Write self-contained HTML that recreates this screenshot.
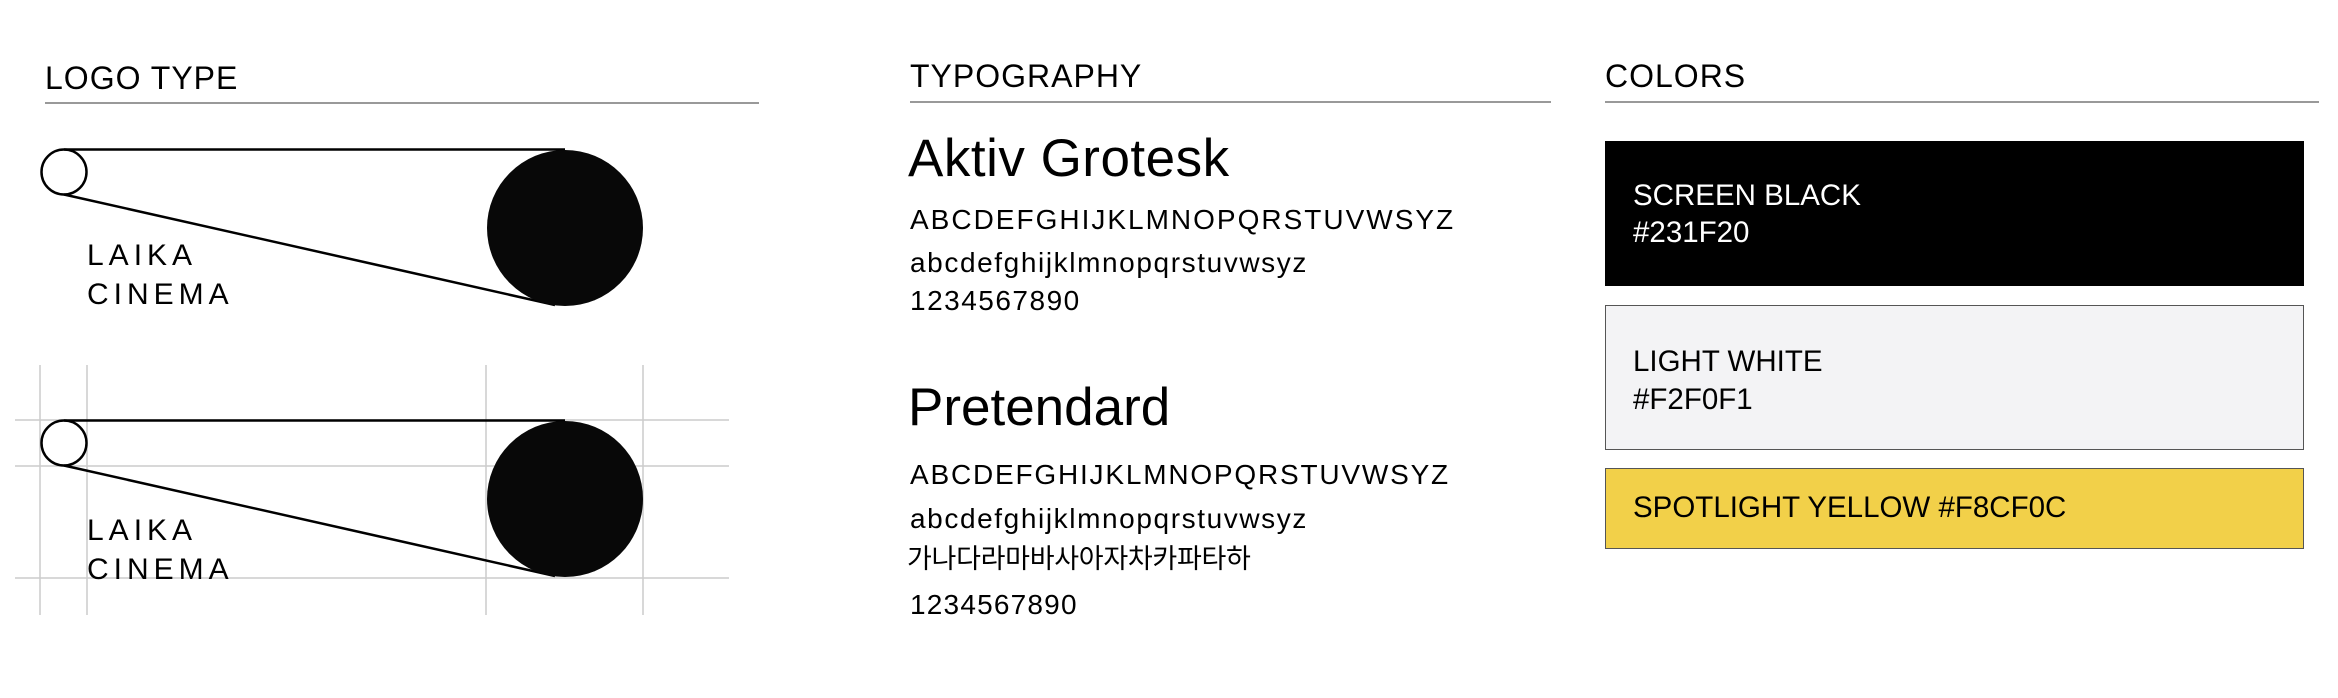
<!DOCTYPE html>
<html><head><meta charset="utf-8"><style>
html,body{margin:0;padding:0;background:#fff;}
body{width:2338px;height:698px;position:relative;overflow:hidden;font-family:"Liberation Sans","Noto Sans CJK KR",sans-serif;color:#000;}
.t{position:absolute;white-space:nowrap;line-height:1;}
.h{font-size:32px;letter-spacing:1px;}
.rule{position:absolute;height:2px;background:#999;}
.box{position:absolute;box-sizing:border-box;}
.c{font-size:29.5px;}
</style></head><body>
<div class="t h" style="left:45px;top:62px;">LOGO TYPE</div>
<div class="rule" style="left:45px;top:102px;width:714px;"></div>
<div class="t h" style="left:910px;top:60px;">TYPOGRAPHY</div>
<div class="rule" style="left:910px;top:101px;width:641px;"></div>
<div class="t h" style="left:1605px;top:60px;">COLORS</div>
<div class="rule" style="left:1605px;top:101px;width:714px;"></div>

<svg style="position:absolute;left:0;top:0" width="780" height="698">
  <g stroke="#ccc" stroke-width="1.5">
    <line x1="40" y1="365" x2="40" y2="615"/><line x1="87" y1="365" x2="87" y2="615"/>
    <line x1="486" y1="365" x2="486" y2="615"/><line x1="643" y1="365" x2="643" y2="615"/>
    <line x1="15" y1="420" x2="729" y2="420"/><line x1="15" y1="466" x2="729" y2="466"/>
    <line x1="15" y1="578" x2="729" y2="578"/>
  </g>
  <g stroke="#000" stroke-width="2.5" fill="none">
    <ellipse cx="64" cy="172" rx="22.5" ry="22.5"/>
    <line x1="64" y1="149.5" x2="565" y2="149.5"/>
    <line x1="64" y1="194.5" x2="555" y2="305"/>
    <ellipse cx="64" cy="443" rx="22.5" ry="22.5"/>
    <line x1="64" y1="420.5" x2="565" y2="420.5"/>
    <line x1="64" y1="465.5" x2="555" y2="576"/>
  </g>
  <ellipse cx="565" cy="228" rx="78" ry="78" fill="#080808"/>
  <ellipse cx="565" cy="499" rx="78" ry="78" fill="#080808"/>
  <g font-family="Liberation Sans" font-size="30" letter-spacing="5" fill="#000">
    <text x="87" y="265">LAIKA</text><text x="87" y="304">CINEMA</text>
    <text x="87" y="540">LAIKA</text><text x="87" y="579">CINEMA</text>
  </g>
</svg>

<div class="t" style="left:908px;top:132px;font-size:53px;letter-spacing:0.5px;">Aktiv Grotesk</div>
<div class="t" style="left:910px;top:206px;font-size:28px;letter-spacing:2px;">ABCDEFGHIJKLMNOPQRSTUVWSYZ</div>
<div class="t" style="left:910px;top:249px;font-size:28px;letter-spacing:1.6px;">abcdefghijklmnopqrstuvwsyz</div>
<div class="t" style="left:910px;top:287px;font-size:28px;letter-spacing:1.5px;">1234567890</div>

<div class="t" style="left:908px;top:381px;font-size:53px;">Pretendard</div>
<div class="t" style="left:910px;top:461px;font-size:28px;letter-spacing:1.8px;">ABCDEFGHIJKLMNOPQRSTUVWSYZ</div>
<div class="t" style="left:910px;top:505px;font-size:28px;letter-spacing:1.6px;">abcdefghijklmnopqrstuvwsyz</div>
<div class="t" style="left:907px;top:546px;font-size:27px;letter-spacing:-0.3px;">가나다라마바사아자차카파타하</div>
<div class="t" style="left:910px;top:591px;font-size:28px;letter-spacing:1.2px;">1234567890</div>

<div class="box" style="left:1605px;top:141px;width:699px;height:145px;background:#000;"></div>
<div class="t c" style="left:1633px;top:181px;color:#fff;">SCREEN BLACK</div>
<div class="t c" style="left:1633px;top:218px;color:#fff;">#231F20</div>

<div class="box" style="left:1605px;top:305px;width:699px;height:145px;background:#f3f3f5;border:1.5px solid #555;"></div>
<div class="t c" style="left:1633px;top:347px;">LIGHT WHITE</div>
<div class="t c" style="left:1633px;top:385px;">#F2F0F1</div>

<div class="box" style="left:1605px;top:468px;width:699px;height:81px;background:#f2d049;border:1.5px solid #555;"></div>
<div class="t c" style="left:1633px;top:493px;">SPOTLIGHT YELLOW #F8CF0C</div>
</body></html>
